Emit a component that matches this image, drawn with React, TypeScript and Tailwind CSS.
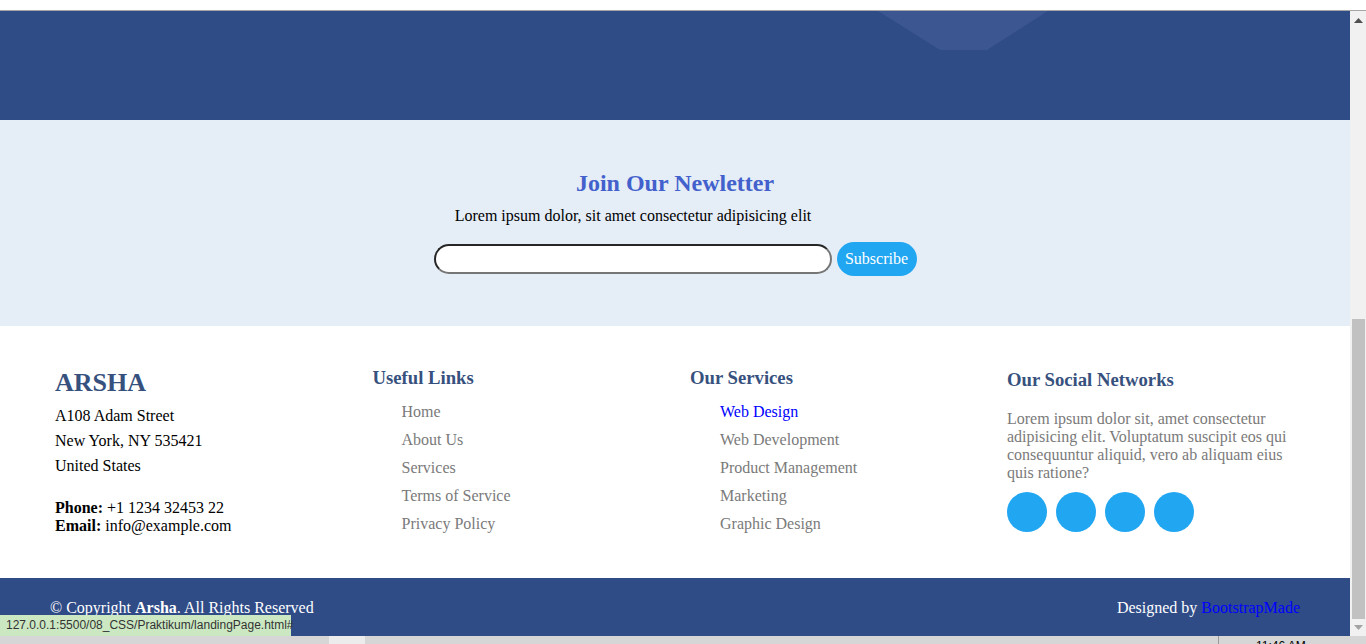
import { FormEvent, useState } from "react"

const usefulLinks = ["Home", "About Us", "Services", "Terms of Service", "Privacy Policy"]
const services = ["Web Design", "Web Development", "Product Management", "Marketing", "Graphic Design"]

function Scrollbar() {
    return (
        <div className="w-[16px] bg-[#f1f1f1] flex flex-col items-center">
            <svg width="9" height="5" viewBox="0 0 9 5" className="mt-[7px]">
                <polygon points="4.5,0 9,5 0,5" fill="#505050" />
            </svg>
            <div className="flex-1" />
            <div className="w-[13px] h-[300px] bg-[#c1c1c1]" />
            <svg width="9" height="5" viewBox="0 0 9 5" className="mt-[6px] mb-[6px]">
                <polygon points="0,0 9,0 4.5,5" fill="#a3a3a3" />
            </svg>
        </div>
    )
}

export default function App() {
    const [email, setEmail] = useState('')

    const handleSubmit = (e: FormEvent<HTMLFormElement>) => {
        e.preventDefault()
    }

    return (
        <div className="relative w-[1366px] h-[644px] overflow-hidden bg-white font-['Liberation_Serif',serif]">
            <div className="h-[11px] bg-white border-b border-[#a6a6a6]" />

            <div className="flex h-[625px]">
                <main className="w-[1350px] flex flex-col">
                    {/* hero bottom */}
                    <section className="relative h-[109px] bg-[#2f4c87]">
                        <svg className="absolute left-[878px] top-0" width="170" height="39" viewBox="0 0 170 39">
                            <polygon points="0,0 170,0 109,39 62,39" fill="#3b5690" />
                        </svg>
                    </section>

                    {/* newsletter */}
                    <section className="h-[206px] bg-[#e5edf7] pt-[49px] text-center">
                        <h2 className="text-[24px] leading-[28px] font-bold text-[#4361cc]">Join Our Newletter</h2>
                        <p className="mt-[10px] pr-[84px] text-[16px] leading-[18px] text-black">
                            Lorem ipsum dolor, sit amet consectetur adipisicing elit
                        </p>
                        <form className="mt-[17px] flex justify-center items-center gap-[5px]" onSubmit={handleSubmit}>
                            <input
                                type="email"
                                value={email}
                                onChange={(e) => setEmail(e.target.value)}
                                className="w-[398px] h-[30px] rounded-full bg-white border-2 border-t-[#262626] border-l-[#262626] border-b-[#767676] border-r-[#767676] px-3 focus:outline-none"
                            />
                            <button
                                type="submit"
                                className="w-[80px] h-[34px] rounded-full bg-[#21a6f2] text-white text-[16px]"
                            >Subscribe</button>
                        </form>
                    </section>

                    {/* footer */}
                    <footer className="h-[252px] bg-white pl-[55px] pt-[42px] grid grid-cols-[317.5px_317.5px_317px_300px]">
                        <div>
                            <h3 className="text-[26px] leading-[30px] font-bold text-[#37517e]">ARSHA</h3>
                            <div className="mt-[5px] text-[16px] leading-[25px] text-black">
                                <p>A108 Adam Street</p>
                                <p>New York, NY 535421</p>
                                <p>United States</p>
                            </div>
                            <div className="mt-[21px] text-[16px] leading-[18px] text-black">
                                <p><strong>Phone:</strong> +1 1234 32453 22</p>
                                <p><strong>Email:</strong> info@example.com</p>
                            </div>
                        </div>

                        <div>
                            <h4 className="-mt-[1px] text-[18.7px] leading-[22px] font-bold text-[#37517e]">Useful Links</h4>
                            <ul className="pl-[29px] mt-[9px] text-[16px] leading-[28px] text-[#7a7a7a]">
                                {usefulLinks.map(link => (
                                    <li key={link}><a href="#">{link}</a></li>
                                ))}
                            </ul>
                        </div>

                        <div>
                            <h4 className="-mt-[1px] text-[18.7px] leading-[22px] font-bold text-[#37517e]">Our Services</h4>
                            <ul className="pl-[30px] mt-[9px] text-[16px] leading-[28px] text-[#7a7a7a]">
                                {services.map((s, i) => (
                                    <li key={s}>
                                        <a href="#" className={i === 0 ? 'text-[#0000ff]' : ''}>{s}</a>
                                    </li>
                                ))}
                            </ul>
                        </div>

                        <div className="pt-[1px]">
                            <h4 className="text-[18.7px] leading-[22px] font-bold text-[#37517e]">Our Social Networks</h4>
                            <p className="mt-[19px] w-[290px] text-[16px] leading-[18px] text-[#7a7a7a]">
                                Lorem ipsum dolor sit, amet consectetur adipisicing elit. Voluptatum suscipit eos qui consequuntur aliquid, vero ab aliquam eius quis ratione?
                            </p>
                            <div className="mt-[10px] flex gap-[9px]">
                                <a href="#" className="w-[40px] h-[40px] rounded-full bg-[#21a6f2]" />
                                <a href="#" className="w-[40px] h-[40px] rounded-full bg-[#21a6f2]" />
                                <a href="#" className="w-[40px] h-[40px] rounded-full bg-[#21a6f2]" />
                                <a href="#" className="w-[40px] h-[40px] rounded-full bg-[#21a6f2]" />
                            </div>
                        </div>
                    </footer>

                    {/* copyright */}
                    <div className="h-[58px] bg-[#2f4c87] px-[50px] pt-[21px] flex justify-between text-[16px] leading-[18px] text-white">
                        <p>© Copyright <strong>Arsha</strong>. All Rights Reserved</p>
                        <p>Designed by <a href="#" className="text-[#0000ff]">BootstrapMade</a></p>
                    </div>
                </main>
                <Scrollbar />
            </div>

            {/* taskbar edge */}
            <div className="h-[8px] bg-[#d6d6d6] flex overflow-hidden">
                <div className="w-[329px]" />
                <div className="w-[36px] bg-[#ececec]" />
                <div className="w-[853px]" />
                <div className="w-[1px] bg-[#9a9a9a]" />
                <div className="pl-[37px] pt-[3px] text-[12px] leading-[14px] text-black font-['Liberation_Sans',sans-serif]">11:46 AM</div>
            </div>

            {/* status tooltip */}
            <div className="absolute left-0 bottom-[8px] h-[21px] w-[291px] bg-[#cce8c3] px-[6px] text-[12px] leading-[21px] text-[#333] font-['Liberation_Sans',sans-serif]">
                127.0.0.1:5500/08_CSS/Praktikum/landingPage.html#
            </div>
        </div>
    )
}
